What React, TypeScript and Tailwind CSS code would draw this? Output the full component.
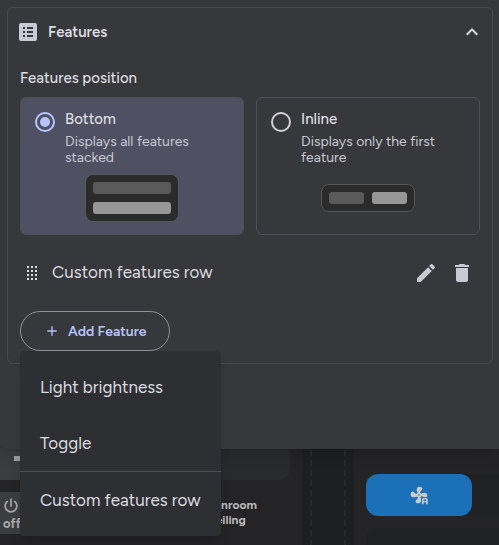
import { useState } from "react";

const ICONS = {
  listBox:
    "M19,3H5C3.9,3 3,3.9 3,5V19C3,20.1 3.9,21 5,21H19C20.1,21 21,20.1 21,19V5C21,3.9 20.1,3 19,3M9,17H7V15H9V17M9,13H7V11H9V13M9,9H7V7H9V9M17,17H11V15H17V17M17,13H11V11H17V13M17,9H11V7H17V9Z",
  chevronUp: "M7.41,15.41L12,10.83L16.59,15.41L18,14L12,8L6,14L7.41,15.41Z",
  drag: "M7,5H9V7H7V5M11,5H13V7H11V5M15,5H17V7H15V5M7,9H9V11H7V9M11,9H13V11H11V9M15,9H17V11H15V9M7,13H9V15H7V13M11,13H13V15H11V13M15,13H17V15H15V13M7,17H9V19H7V17M11,17H13V19H11V17M15,17H17V19H15V17Z",
  pencil:
    "M20.71,7.04C21.1,6.65 21.1,6 20.71,5.63L18.37,3.29C18,2.9 17.35,2.9 16.96,3.29L15.12,5.12L18.87,8.87M3,17.25V21H6.75L17.81,9.93L14.06,6.18L3,17.25Z",
  trash:
    "M19,4H15.5L14.5,3H9.5L8.5,4H5V6H19M6,19A2,2 0 0,0 8,21H16A2,2 0 0,0 18,19V7H6V19Z",
  plus: "M19,13H13V19H11V13H5V11H11V5H13V11H19V13Z",
  power:
    "M16.56,5.44L15.11,6.89C16.84,7.94 18,9.83 18,12A6,6 0 0,1 12,18A6,6 0 0,1 6,12C6,9.83 7.16,7.94 8.88,6.88L7.44,5.44C5.36,6.88 4,9.28 4,12A8,8 0 0,0 12,20A8,8 0 0,0 20,12C20,9.28 18.64,6.88 16.56,5.44M13,3H11V13H13",
};

function Icon({ name, className = "size-6" }: { name: keyof typeof ICONS; className?: string }) {
  return (
    <svg viewBox="0 0 24 24" className={`shrink-0 fill-current ${className}`} aria-hidden="true">
      <path d={ICONS[name]} />
    </svg>
  );
}

const FAN_BLADE = "M12,12C10,9.500 8.500,6.500 9.500,4C10.200,2.300 11.500,2 13,2C16.500,2 17,5.500 14.700,6.700C13.200,7.500 13.200,9 13.600,11Z";

function FanAutoIcon() {
  return (
    <svg viewBox="0 0 24 24" className="size-5 shrink-0 fill-current" aria-hidden="true">
      <path d={FAN_BLADE} />
      <path d={FAN_BLADE} transform="rotate(90 12 12)" />
      <path d={FAN_BLADE} transform="rotate(180 12 12)" />
      <path d={FAN_BLADE} transform="rotate(270 12 12)" />
      <circle cx="12" cy="12" r="3" />
      <circle cx="12" cy="12" r="1" className="fill-[#1b70b8]" />
      <rect x="14.500" y="14.500" width="9" height="9" className="fill-[#1b70b8]" />
      <path d="M17.500,15.500A2,2 0 0,0 15.500,17.500V23H17.500V20.800H20.500V23H22.500V17.500A2,2 0 0,0 20.500,15.500H17.500M17.500,17.300H20.500V19.200H17.500Z" fillRule="evenodd" />
    </svg>
  );
}

function Dashboard() {
  return (
    <div
      className="grid grid-cols-[302fr_52px_145fr] bg-[#242427] pt-[440px] [grid-area:1/1]"
      aria-hidden="true"
    >
      <section className="flex min-w-0 flex-col gap-3 pr-3">
        <div className="flex h-10 overflow-hidden rounded-br-xl bg-[#292a2c]">
          <div className="flex w-12 items-start bg-[#3b3c3f] pl-[14px] pt-4">
            <span className="h-[5px] w-4 bg-[#a0a0a4]" />
          </div>
        </div>
        <div className="flex items-center text-[12px] font-bold leading-[15px] text-[#b9b9bb]">
          <div className="flex h-[42px] w-12 flex-col items-start justify-center bg-[#3c3d40] pl-px text-[13px] text-[#a9a9ac]">
            <Icon name="power" className="size-5" />
            <span className="pl-[2px]">off</span>
          </div>
          <p className="ml-auto w-[83px]">
            Sunroom
            <br />
            Ceiling
          </p>
        </div>
      </section>
      <div className="flex justify-between bg-[#1e1f21] px-2">
        <span className="w-[2px] bg-[repeating-linear-gradient(#2a2a2d_0_6px,transparent_6px_10px)]" />
        <span className="w-[2px] bg-[repeating-linear-gradient(#2a2a2d_0_6px,transparent_6px_10px)]" />
      </div>
      <section className="flex min-w-0 flex-col gap-3 pl-3 pt-[34px]">
        <div className="flex rounded-l-xl bg-[#202123]">
          <div className="flex h-[42px] w-[106px] items-center justify-center rounded-xl bg-[#1b70b8] text-[#c6cbd0]">
            <FanAutoIcon />
          </div>
        </div>
        <div className="flex-1 rounded-tl-xl bg-[#202124]" />
      </section>
    </div>
  );
}

function StackedPreview() {
  return (
    <span className="flex w-[94px] flex-col gap-2 rounded-lg border border-[#565656] bg-[#2b2b2b] p-[7px]">
      <span className="h-3 rounded-[3px] bg-[#5a5a5a]" />
      <span className="h-3 rounded-[3px] bg-[#969696]" />
    </span>
  );
}

function InlinePreview() {
  return (
    <span className="flex w-[94px] gap-2 rounded-lg border border-[#565656] bg-[#2b2b2b] p-[7px]">
      <span className="h-3 flex-1 rounded-[3px] bg-[#5a5a5a]" />
      <span className="h-3 flex-1 rounded-[3px] bg-[#969696]" />
    </span>
  );
}

const POSITIONS = [
  { id: "bottom", label: "Bottom", text: "Displays all features stacked", Preview: StackedPreview },
  { id: "inline", label: "Inline", text: "Displays only the first feature", Preview: InlinePreview },
];

function PositionPicker() {
  const [position, setPosition] = useState("bottom");
  return (
    <fieldset>
      <legend className="mb-2 text-[15px] font-medium leading-[22px]">Features position</legend>
      <div className="grid grid-cols-2 gap-3">
        {POSITIONS.map(({ id, label, text, Preview }) => (
          <label
            key={id}
            className="flex flex-col gap-2 rounded-md border border-[#4d4e58] px-[14px] pb-3 pt-[13px] has-checked:bg-[#4f5162]"
          >
            <span className="flex gap-[10px]">
              <input
                type="radio"
                name="position"
                value={id}
                checked={position === id}
                onChange={() => setPosition(id)}
                className="mt-px size-5 shrink-0 appearance-none rounded-full border-2 border-[#d0d0d6] bg-clip-content p-[3px] checked:border-[#b8c4ff] checked:bg-[#b8c4ff]"
              />
              <span className="min-w-0">
                <span className="block text-[15px] font-medium leading-4">{label}</span>
                <span className="mt-[7px] block text-[14px] leading-4 text-[#c8c8d2]">{text}</span>
              </span>
            </span>
            <span className="flex h-12 items-center justify-center">
              <Preview />
            </span>
          </label>
        ))}
      </div>
    </fieldset>
  );
}

function AddFeatureMenu() {
  return (
    <div
      role="menu"
      className="absolute left-0 top-full z-10 whitespace-nowrap rounded bg-[#2e2f33] py-2 text-[17px] leading-6 shadow-lg"
    >
      <button type="button" role="menuitem" className="block h-14 w-full px-5 text-left">
        Light brightness
      </button>
      <button type="button" role="menuitem" className="block h-14 w-full px-5 text-left">
        Toggle
      </button>
      <hr className="border-[#4d4e53]" />
      <button type="button" role="menuitem" className="block h-14 w-full px-5 text-left">
        Custom features row
      </button>
    </div>
  );
}

export default function App() {
  return (
    <main className="grid min-h-screen overflow-hidden bg-[#242427] font-['Figtree','Inter',sans-serif] text-[#dcdbe0]">
      <Dashboard />
      <div
        role="dialog"
        aria-label="Features"
        className="z-10 -ml-3 self-start rounded-bl-3xl bg-[#37383c] pb-[85px] pl-[19px] pr-[6px] pt-[7px] shadow-lg [grid-area:1/1]"
      >
        <section className="rounded-md border border-[#48494e] px-3 pb-3">
          <h2>
            <button type="button" className="flex h-12 w-full items-center text-[15px] font-semibold">
              <span className="-ml-1 mr-2 text-[#cac9d6]">
                <Icon name="listBox" />
              </span>
              Features
              <Icon name="chevronUp" className="ml-auto -mr-1 size-6" />
            </button>
          </h2>
          <div className="pt-[11px]">
            <PositionPicker />
          </div>
          <div className="mt-[14px] flex h-12 items-center text-[17px]">
            <Icon name="drag" />
            <span className="ml-2 flex-1">Custom features row</span>
            <button type="button" aria-label="Edit" className="grid size-9 place-items-center text-[#cac9d6]">
              <Icon name="pencil" />
            </button>
            <button type="button" aria-label="Delete" className="grid size-9 place-items-center text-[#cac9d6]">
              <Icon name="trash" />
            </button>
          </div>
          <div className="relative mt-[14px] w-fit">
            <button
              type="button"
              aria-haspopup="menu"
              aria-expanded="true"
              className="flex h-10 items-center gap-2 rounded-full border border-[#91919a] px-[23px] text-[14px] font-semibold text-[#b8c4ff]"
            >
              <Icon name="plus" className="size-4" />
              Add Feature
            </button>
            <AddFeatureMenu />
          </div>
        </section>
      </div>
    </main>
  );
}
